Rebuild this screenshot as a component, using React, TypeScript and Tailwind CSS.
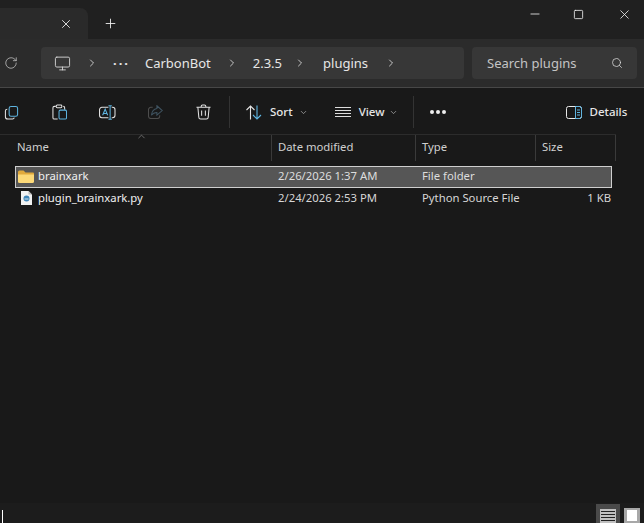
import React from 'react';
import { ChevronRight, ChevronDown, ChevronUp, Minus, Square, X, Plus, RotateCw, Search, Monitor } from 'lucide-react';

const columns = [
  { label: 'Name', width: 'w-[272px]' },
  { label: 'Date modified', width: 'w-[144px]' },
  { label: 'Type', width: 'w-[120px]' },
  { label: 'Size', width: 'w-[80px]' },
];

export default function App() {
  return (
    <div className="relative flex h-[523px] w-[644px] flex-col overflow-hidden bg-[#191919] text-[13px] text-[#e6e6e6] font-['Noto_Sans',sans-serif]">
      {/* TITLE BAR */}
      <div className="flex h-[39px] shrink-0 bg-[#202020]">
        <div className="mt-2 flex w-[88px] items-center justify-end rounded-tr-lg bg-[#2a2a2a] pr-[15px]">
          <X size={14} strokeWidth={1.5} className="text-[#f0f0f0]" />
        </div>
        <div className="ml-[15px] mt-2 flex h-[31px] items-center">
          <Plus size={15} strokeWidth={1.4} className="text-[#f0f0f0]" />
        </div>
        <div className="ml-auto flex h-7 items-center">
          <Minus size={14} strokeWidth={1.4} className="mr-[31px] text-[#f0f0f0]" />
          <Square size={11} strokeWidth={1.8} className="mr-[33px] text-[#f0f0f0]" />
          <X size={15} strokeWidth={1.3} className="mr-[12px] text-[#f0f0f0]" />
        </div>
      </div>

      {/* ADDRESS ROW */}
      <div className="flex h-[49px] shrink-0 items-start border-b border-[#474747] bg-[#2b2b2b] pt-2">
        <div className="flex h-8 w-[41px] items-center pl-[4px]">
          <RotateCw size={14} strokeWidth={1.2} className="text-[#d0d0d0]" />
        </div>
        <div className="flex h-8 w-[423px] items-center rounded bg-[#373737] pl-[13px]">
          <Monitor size={17} strokeWidth={1.3} className="text-[#d4d4d4]" />
          <Crumb className="ml-[15px]" />
          <span className="ml-[15px] text-[13px] leading-none tracking-[2px] font-bold">···</span>
          <span className="ml-[15px] pt-[2px]">CarbonBot</span>
          <Crumb className="ml-[15px]" />
          <span className="ml-[15px] pt-[2px]">2.3.5</span>
          <Crumb className="ml-[12px]" />
          <span className="ml-[17px] pt-[2px]">plugins</span>
          <Crumb className="ml-[17px]" />
        </div>
        <div className="ml-2 flex h-8 w-[165px] items-center rounded bg-[#373737] pl-[15px] text-[#c4c4c4]">
          <span className="pt-[2px]">Search plugins</span>
          <Search size={12} strokeWidth={1.5} className="ml-auto mr-[14px] text-[#dddddd]" />
        </div>
      </div>

      {/* TOOLBAR */}
      <div className="flex h-[46px] shrink-0 items-center pt-[2px] text-[11.5px] font-medium">
        <div className="flex w-[229px] items-center">
          <ToolIcon className="ml-[2px]"><CopyIcon /></ToolIcon>
          <ToolIcon className="ml-[30px]"><PasteIcon /></ToolIcon>
          <ToolIcon className="ml-[30px]"><RenameIcon /></ToolIcon>
          <ToolIcon className="ml-[30px]"><ShareIcon /></ToolIcon>
          <ToolIcon className="ml-[30px]"><TrashIcon /></ToolIcon>
        </div>
        <div className="h-8 w-px bg-[#333333]" />
        <SortIcon />
        <span className="ml-[8px]">Sort</span>
        <ChevronDown size={9} className="ml-[6px] text-[#aaaaaa]" />
        <svg width="16" height="12" viewBox="0 0 16 12" className="ml-[27px] text-[#dddddd]" fill="none" stroke="currentColor" strokeWidth="1">
          <path d="M0 1.500h16M0 4.500h16M0 7.500h16M0 10.500h16" />
        </svg>
        <span className="ml-[8px]">View</span>
        <ChevronDown size={9} className="ml-[5px] text-[#aaaaaa]" />
        <div className="ml-[15px] h-8 w-px bg-[#333333]" />
        <div className="ml-[16px] flex gap-[2px]">
          <span className="size-[4px] rounded-full bg-[#eeeeee]" />
          <span className="size-[4px] rounded-full bg-[#eeeeee]" />
          <span className="size-[4px] rounded-full bg-[#eeeeee]" />
        </div>
        <svg width="16" height="13" viewBox="0 0 16 13" className="ml-[120px]" fill="none" strokeWidth="1">
          <rect x="0.5" y="0.5" width="15" height="12" rx="2" stroke="#e8e8e8" />
          <path d="M9.500 0.5h4a2 2 0 0 1 2 2v8a2 2 0 0 1-2 2h-4z" stroke="#5eb4e0" />
          <path d="M11 4h3M11 6.500h3M11 9h3" stroke="#5eb4e0" />
        </svg>
        <span className="ml-[7px]">Details</span>
      </div>

      {/* COLUMN HEADERS */}
      <div className="flex h-[27px] w-[616px] shrink-0 border-t border-[#2c2c2c]">
        {columns.map(c => (
          <div key={c.label} className={`${c.width} flex h-[26px] items-center border-r border-[#3a3a3a] pb-[2px] ${c.label === 'Name' ? 'pl-[17px]' : 'pl-[6px]'} text-[11.3px] text-[#d0d0d0]`}>
            {c.label}
          </div>
        ))}
      </div>
      <ChevronUp size={11} strokeWidth={1.2} className="absolute left-[136px] top-[131px] text-[#aaaaaa]" />

      {/* FILE LIST */}
      <div className="ml-[15px] mt-[5px] flex w-[597px] flex-col text-[11.3px]">
        <div className="flex h-[22px] items-center border border-[#cfcfcf] bg-[#565656]">
          <div className="flex w-[255px] items-center pl-[2px]">
            <FolderIcon />
            <span className="ml-[4px] pb-[2px] text-[#f0f0f0]">brainxark</span>
          </div>
          <span className="w-[144px] pb-[2px] pl-[7px] text-[#dddddd]">2/26/2026 1:37 AM</span>
          <span className="w-[120px] pb-[2px] pl-[7px] text-[#dddddd]">File folder</span>
        </div>
        <div className="flex h-[20px] items-center">
          <div className="flex w-[256px] items-center pl-[6px]">
            <PyFileIcon />
            <span className="ml-[6px] pt-px text-[#f0f0f0]">plugin_brainxark.py</span>
          </div>
          <span className="w-[144px] pt-px pl-[7px] text-[#d6d6d6]">2/24/2026 2:53 PM</span>
          <span className="w-[120px] pt-px pl-[7px] text-[#d6d6d6]">Python Source File</span>
          <span className="w-[77px] pt-px pr-[1px] text-right text-[#d6d6d6]">1 KB</span>
        </div>
      </div>

      {/* STATUS BAR */}
      <div className="mt-auto flex h-[20px] shrink-0 items-start justify-end bg-[#1c1c1c]">
        <div className="mt-px flex h-[19px] w-[24px] justify-center bg-[#4a4a4a] pt-[5px]">
          <div className="flex h-[16px] w-[16px] flex-col gap-[2px] bg-[#c0c0c0] px-[1px] pt-[2px]">
            <span className="h-px bg-[#222222]" />
            <span className="h-px bg-[#222222]" />
            <span className="h-px bg-[#222222]" />
            <span className="h-px bg-[#222222]" />
          </div>
        </div>
        <div className="ml-[4px] mr-[4px] flex h-[20px] w-[16px] flex-col pt-[5px]">
          <div className="h-[16px] border-x-[3px] border-y-2 border-[#a8a8a8] bg-white" />
        </div>
      </div>
      <div className="absolute bottom-0 left-[2px] h-[13px] w-px bg-white" />
    </div>
  );
}

function Crumb({ className }: any) {
  return <ChevronRight size={12} strokeWidth={1.6} className={`${className} shrink-0 text-[#e8e8e8]`} />;
}

function ToolIcon({ children, className }: any) {
  return <div className={`${className} flex h-[18px] w-[18px] items-center justify-center`}>{children}</div>;
}

function SortIcon() {
  return (
    <svg width="16" height="15" viewBox="0 0 16 15" className="ml-[16px]" fill="none" strokeWidth="1.1">
      <path d="M4.500 14.500V1M.5 5 4.500 1 8.500 5" stroke="#e4e4e4" />
      <path d="M11 .5V14M7 10l4 4 4-4" stroke="#5eb4e0" />
    </svg>
  );
}

function CopyIcon() {
  return (
    <svg width="15" height="15" viewBox="0 0 16 16" fill="none" strokeWidth="1.1">
      <path d="M3.500 4.500a2 2 0 0 0-2 2v6a2.500 2.500 0 0 0 2.500 2.500h5a2 2 0 0 0 2-1.500" stroke="#e4e4e4" />
      <rect x="5.500" y="1.500" width="9" height="10.500" rx="2" stroke="#5eb4e0" />
    </svg>
  );
}

function PasteIcon() {
  return (
    <svg width="15" height="16" viewBox="0 0 16 17" fill="none" strokeWidth="1.1">
      <path d="M4 2.500H2.500a1.500 1.500 0 0 0-1.500 1.500v10.500a1.500 1.500 0 0 0 1.500 1.500H6M12 2.500a1.500 1.500 0 0 1 1.500 1.500V6" stroke="#e4e4e4" />
      <rect x="4.500" y="1" width="6" height="3" rx="1" stroke="#e4e4e4" />
      <rect x="7.500" y="6.500" width="8" height="9.500" rx="1.500" stroke="#5eb4e0" />
    </svg>
  );
}

function RenameIcon() {
  return (
    <svg width="17" height="15" viewBox="0 0 18 16" fill="none" strokeWidth="1.1">
      <path d="M10 2.500H3a2.500 2.500 0 0 0-2.500 2.500v6A2.500 2.500 0 0 0 3 13.500h7M13.500 2.500h1a2.500 2.500 0 0 1 2.500 2.500v6a2.500 2.500 0 0 1-2.500 2.500h-1" stroke="#e4e4e4" />
      <path d="M3.800 11 6.500 4.500 9.200 11M4.800 9h3.400M11.800 1v14M10 .8h3.600M10 15.200h3.600" stroke="#5eb4e0" />
    </svg>
  );
}

function ShareIcon() {
  return (
    <svg width="15" height="14" viewBox="0 0 16 15" fill="none" strokeWidth="1.1" stroke="#4d4d4d">
      <path d="M5 2.500H3A2.500 2.500 0 0 0 .5 5v7A2.500 2.500 0 0 0 3 14.500h7a2.500 2.500 0 0 0 2.500-2.500v-1" />
      <path d="M9.500.8 15.200 6 9.500 10.800V8C7 8 5 9 3.600 11 4 7.500 6 4.300 9.500 3.800z" stroke="#3f5360" />
    </svg>
  );
}

function TrashIcon() {
  return (
    <svg width="15" height="16" viewBox="0 0 16 17" fill="none" strokeWidth="1.1" stroke="#e4e4e4">
      <path d="M.5 3.500h15M5.500 3.500V2.500a1.500 1.500 0 0 1 1.500-1.500h2a1.500 1.500 0 0 1 1.500 1.500v1" />
      <path d="M2 3.500 3 14a2 2 0 0 0 2 2h6a2 2 0 0 0 2-2l1-10.500M6 7v5.500M10 7v5.500" />
    </svg>
  );
}

function FolderIcon() {
  return (
    <svg width="16" height="13" viewBox="0 0 16 13" className="-mt-[2px]">
      <path d="M0 2a1.500 1.500 0 0 1 1.500-1.500h4L7.500 2.500H15a1 1 0 0 1 1 1V5H0z" fill="#e0a93c" />
      <path d="M0 4.500h16v7a1.500 1.500 0 0 1-1.500 1.500h-13A1.500 1.500 0 0 1 0 11.500z" fill="#fcd978" />
    </svg>
  );
}

function PyFileIcon() {
  return (
    <svg width="11" height="14" viewBox="0 0 11 14">
      <path d="M0 0h7.500L11 3.500V14H0z" fill="#f2f2f2" />
      <path d="M7.500 0 11 3.500H7.500z" fill="#b8b8b8" />
      <circle cx="5.500" cy="7.500" r="3" fill="#3f86b8" />
      <path d="M3.500 8h4" stroke="#d8e4ec" strokeWidth="1" />
    </svg>
  );
}
